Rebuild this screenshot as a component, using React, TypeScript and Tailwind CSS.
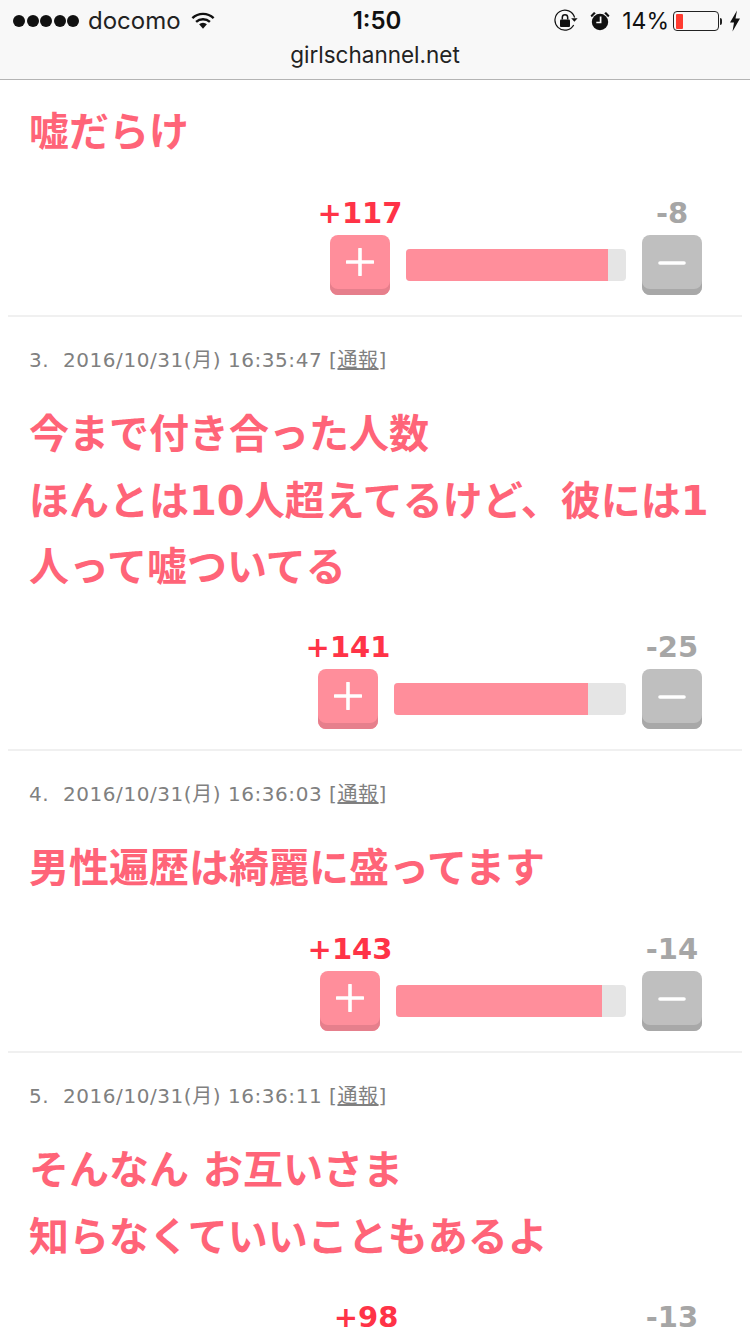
const JP = "font-['DejaVu_Sans','Noto_Sans_CJK_JP','Noto_Sans_CJK_SC',sans-serif]"

interface VoteProps {
  plus: string
  minus: string
  barWidth: number
  fillWidth: number
}

function StatusIcons() {
  return (
    <div className="flex flex-1 items-center justify-end">
      {/* rotation lock */}
      <svg width="24" height="24" viewBox="0 0 24 24" className="mr-[12px]">
        <path d="M19.7 16A10 10 0 1 1 20.6 8.5" fill="none" stroke="#111" strokeWidth="1.2" />
        <path d="M17.2 9.2h6.4l-3.2 3.6z" fill="#111" />
        <rect x="6" y="10.5" width="10" height="7.5" rx="1" fill="#111" />
        <path d="M8.3 10.5V8.5a2.7 2.7 0 0 1 5.4 0v2" fill="none" stroke="#111" strokeWidth="1.5" />
      </svg>
      {/* alarm */}
      <svg width="20" height="20" viewBox="0 0 20 20" className="mr-[12px]">
        <circle cx="10" cy="11" r="8.2" fill="#111" />
        <path d="M.5 4.5 4 1l1.8 1.2L1.8 6.2zM19.5 4.5 16 1l-1.8 1.2 4 4z" fill="#111" />
        <path d="M10.6 5.5v6H6.3" fill="none" stroke="#fafafa" strokeWidth="1.7" />
      </svg>
      <span className="text-[23px] leading-8 text-[#111]">14%</span>
      {/* battery */}
      <div className="ml-[4px] h-[20px] w-[46px] rounded-[4px] border border-[#222] p-[1.5px]">
        <div className="h-full w-[7px] rounded-[1px] bg-[#ff3b30]" />
      </div>
      <div className="ml-px h-[7px] w-[2px] rounded-r-sm bg-[#222]" />
      <svg width="12" height="22" viewBox="0 0 12 22" className="ml-[7px]">
        <path d="M8 .5 1 12.5h4L3.5 21.5 11 8.5H6.5z" fill="#111" />
      </svg>
    </div>
  )
}

function Header() {
  return (
    <header className="h-20 border-b border-[#b4b4b4] bg-[#f8f8f8] font-['Inter',sans-serif]">
      <div className="flex h-10 items-center pl-[13px] pr-[9px] pt-[2px]">
        <div className="flex flex-1 items-center">
          <div className="flex gap-[1.5px]">
            {[0, 1, 2, 3, 4].map((i) => (
              <div key={i} className="size-[12px] rounded-full bg-[#111]" />
            ))}
          </div>
          <span className="ml-[9px] text-[24px] leading-8 text-[#222]">docomo</span>
          <svg width="24" height="18" viewBox="0 0 26 19" className="ml-[10px]">
            <path d="M1.5 6.5a16.5 16.5 0 0 1 23 0" fill="none" stroke="#111" strokeWidth="2.6" />
            <path d="M5.5 10.5a11 11 0 0 1 15 0" fill="none" stroke="#111" strokeWidth="2.6" />
            <path d="M8.8 13a6 6 0 0 1 8.4 0L13 18z" fill="#111" />
          </svg>
        </div>
        <span className="text-[24px] font-semibold leading-8 text-[#111]">1:50</span>
        <StatusIcons />
      </div>
      <div className="text-center text-[22.5px] leading-[30px] text-[#222]">girlschannel.net</div>
    </header>
  )
}

function VoteRow({ plus, minus, barWidth, fillWidth }: VoteProps) {
  return (
    <div className="flex justify-end pr-[48px] font-['DejaVu_Sans',sans-serif]">
      <div className="flex w-[60px] flex-col items-center">
        <div className="h-[44px] whitespace-nowrap pt-[7px] text-[29px] font-bold leading-[30px] text-[#ff3347]">{plus}</div>
        <button className="relative size-[60px] rounded-[8px] bg-[#ff8e9b] shadow-[inset_0_-6px_0_#e67f8c]">
          <svg width="28" height="28" viewBox="0 0 28 28" className="absolute left-[16px] top-[13px]">
            <path d="M14 1v26M1 14h26" stroke="#fff" strokeWidth="3.6" strokeLinecap="round" />
          </svg>
        </button>
      </div>
      <div className="mx-[16px] mt-[58px] h-[32px] overflow-hidden rounded-[4px] bg-[#e5e5e5]" style={{ width: barWidth }}>
        <div className="h-full bg-[#ff8e9b]" style={{ width: fillWidth }} />
      </div>
      <div className="flex w-[60px] flex-col items-center">
        <div className="h-[44px] whitespace-nowrap pt-[7px] text-[29px] font-bold leading-[30px] text-[#a6a6a6]">{minus}</div>
        <button className="relative size-[60px] rounded-[8px] bg-[#bfbfbf] shadow-[inset_0_-6px_0_#a8a8a8]">
          <svg width="28" height="6" viewBox="0 0 28 6" className="absolute left-[16px] top-[25px]">
            <path d="M2 3h24" stroke="#fff" strokeWidth="3.6" strokeLinecap="round" />
          </svg>
        </button>
      </div>
    </div>
  )
}

function Meta({ num, date }: { num: number; date: string }) {
  return (
    <div className={`pl-[29px] pt-[31px] text-[20px] leading-6 tracking-[0.55px] text-[#808080] ${JP}`}>
      {num}.&nbsp; {date} [<span className="underline">通報</span>]
    </div>
  )
}

function Body({ lines }: { lines: string[] }) {
  return (
    <div className={`pl-[29px] text-[40px] font-bold leading-[66.5px] text-[#ff6478] ${JP}`}>
      {lines.map((l) => (
        <div key={l} className="whitespace-nowrap">{l}</div>
      ))}
    </div>
  )
}

export default function App() {
  return (
    <div className="h-[1334px] w-[750px] overflow-hidden bg-white">
      <Header />
      <div className="pt-[19px]">
        <Body lines={['嘘だらけ']} />
      </div>
      <div className="mt-[25.5px]">
        <VoteRow plus="+117" minus="-8" barWidth={220} fillWidth={202} />
      </div>
      <div className="mx-2 mt-[20px] h-[2px] bg-[#f0f0f0]" />

      <Meta num={3} date="2016/10/31(月) 16:35:47" />
      <div className="mt-[29px]">
        <Body lines={['今まで付き合った人数', 'ほんとは10人超えてるけど、彼には1', '人って嘘ついてる']} />
      </div>
      <div className="mt-[24.5px]">
        <VoteRow plus="+141" minus="-25" barWidth={232} fillWidth={194} />
      </div>
      <div className="mx-2 mt-[20px] h-[2px] bg-[#f0f0f0]" />

      <Meta num={4} date="2016/10/31(月) 16:36:03" />
      <div className="mt-[29px]">
        <Body lines={['男性遍歴は綺麗に盛ってます']} />
      </div>
      <div className="mt-[25.5px]">
        <VoteRow plus="+143" minus="-14" barWidth={230} fillWidth={206} />
      </div>
      <div className="mx-2 mt-[20px] h-[2px] bg-[#f0f0f0]" />

      <Meta num={5} date="2016/10/31(月) 16:36:11" />
      <div className="mt-[29px]">
        <Body lines={['そんなん お互いさま', '知らなくていいこともあるよ']} />
      </div>
      <div className="mt-[25px]">
        <VoteRow plus="+98" minus="-13" barWidth={214} fillWidth={189} />
      </div>
    </div>
  )
}
